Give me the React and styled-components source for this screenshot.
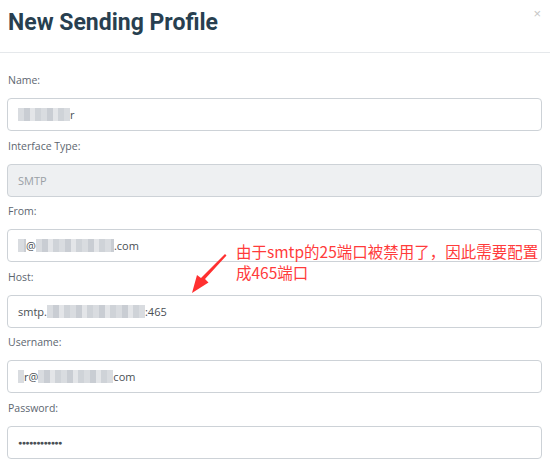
import styled, { createGlobalStyle } from "styled-components";

const GlobalStyle = createGlobalStyle`
  html, body {
    margin: 0;
    padding: 0;
    background: #fff;
  }
  body {
    font-family: "Open Sans", "Liberation Sans", sans-serif;
  }
`;

const Modal = styled.div`
  position: relative;
  width: 550px;
  height: 465px;
  overflow: hidden;
  background: #fff;
`;

const Header = styled.div`
  display: flex;
  justify-content: space-between;
  align-items: flex-start;
  height: 53px;
  box-sizing: border-box;
  border-bottom: 1px solid #e5e8eb;
  padding: 0 8px 0 8px;
`;

const Title = styled.h4`
  margin: 8px 0 0 0;
  font-family: Roboto, "Liberation Sans", sans-serif;
  font-weight: 700;
  font-size: 23px;
  line-height: 30px;
  color: #283f50;
`;

const Close = styled.span`
  margin-top: 6px;
  margin-right: 1px;
  font-family: "Liberation Sans", Arial, sans-serif;
  font-size: 13px;
  color: #c6c6c6;
`;

const Body = styled.div`
  padding: 19px 8px 0 7px;
`;

const Group = styled.div`
  display: flex;
  flex-direction: column;
  margin-bottom: 6.5px;
`;

const Label = styled.label`
  font-size: 10.5px;
  line-height: 16px;
  height: 16px;
  margin: 0 0 10px 1px;
  color: #5d6670;
`;

const Field = styled.div`
  display: flex;
  align-items: center;
  height: 33px;
  box-sizing: border-box;
  padding: 0 10px;
  border: 1px solid #cdd2d7;
  border-radius: 4px;
  background: ${(p) => (p.disabled ? "#eef0f2" : "#fff")};
  color: ${(p) => (p.disabled ? "#9aa0a6" : "#4a4f55")};
  font-size: 11px;
`;

const Mosaic = styled.span`
  display: inline-block;
  height: 13px;
  background: repeating-linear-gradient(
    90deg,
    #d9dce0 0 6px,
    #c9cdd3 6px 12px,
    #e3e5e8 12px 17px,
    #cfd3d8 17px 23px
  );
`;

const Dots = styled.span`
  font-size: 7px;
  letter-spacing: -0.6px;
  color: #4a4f55;
`;

const Note = styled.div`
  position: absolute;
  left: 236px;
  top: 241px;
  font-family: "Noto Sans CJK SC", sans-serif;
  font-size: 15.5px;
  line-height: 21px;
  color: #ff3b3b;
  white-space: nowrap;
`;

const Arrow = styled.svg`
  position: absolute;
  left: 188px;
  top: 250px;
`;

function Blur({ w }) {
  return <Mosaic style={{ width: w }} />;
}

export default function App() {
  return (
    <>
      <GlobalStyle />
      <Modal>
        <Header>
          <Title>New Sending Profile</Title>
          <Close>×</Close>
        </Header>
        <Body>
          <Group>
            <Label>Name:</Label>
            <Field>
              <Blur w={52} />r
            </Field>
          </Group>
          <Group>
            <Label>Interface Type:</Label>
            <Field disabled>SMTP</Field>
          </Group>
          <Group>
            <Label>From:</Label>
            <Field>
              <Blur w={8} />@<Blur w={78} />.com
            </Field>
          </Group>
          <Group>
            <Label>Host:</Label>
            <Field>
              smtp.<Blur w={98} />:465
            </Field>
          </Group>
          <Group>
            <Label>Username:</Label>
            <Field>
              <Blur w={6} />r@<Blur w={75} />com
            </Field>
          </Group>
          <Group>
            <Label>Password:</Label>
            <Field>
              <Dots>●●●●●●●●●●●●</Dots>
            </Field>
          </Group>
        </Body>
        <Note>
          由于smtp的25端口被禁用了，因此需要配置
          <br />
          成465端口
        </Note>
        <Arrow width="42" height="46" viewBox="0 0 42 46">
          <path d="M37 4 L38.5 5.5 L17 29 L20.5 32.5 L4 43 L9 25 L13 28 Z" fill="#ff3030" />
        </Arrow>
      </Modal>
    </>
  );
}
